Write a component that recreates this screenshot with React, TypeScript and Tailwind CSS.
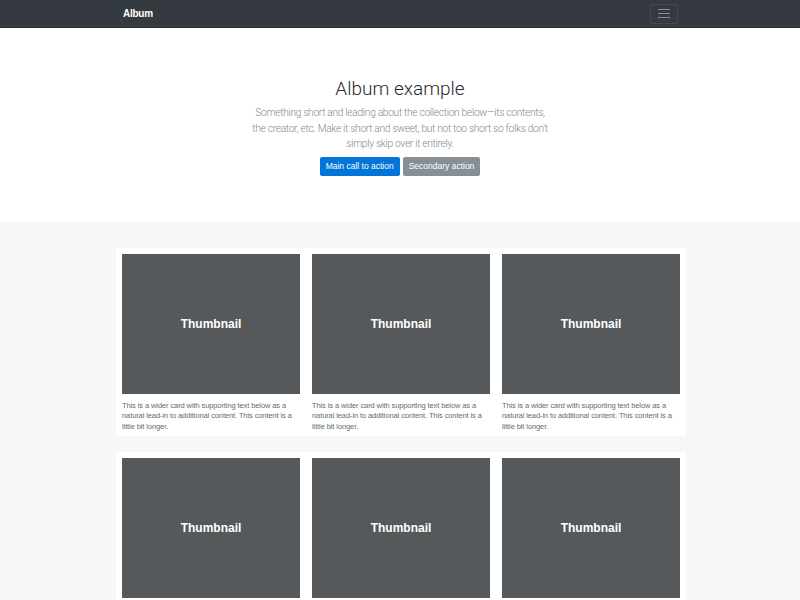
import React from 'react';

const cardLines = [
  'This is a wider card with supporting text below as a',
  'natural lead-in to additional content. This content is a',
  'little bit longer.',
];

const leadLines = [
  'Something short and leading about the collection below—its contents,',
  "the creator, etc. Make it short and sweet, but not too short so folks don't",
  'simply skip over it entirely.',
];

const Card: React.FC = () => (
  <div className="bg-white px-[6px] pt-[6px] pb-[4px]">
    <div className="h-[140px] bg-[#55595c] flex items-center justify-center">
      <span className="text-white font-bold text-[12px]">Thumbnail</span>
    </div>
    <p className="mt-[7px] text-[7.5px] tracking-[-0.1px] leading-[10.3px] text-[#636c72]">
      {cardLines.map((l, i) => (
        <span key={i} className="block whitespace-nowrap">{l}</span>
      ))}
    </p>
  </div>
);

const App: React.FC = () => {
  return (
    <div className="min-h-[600px] bg-[#f7f7f7] font-['Liberation_Sans',Arial,sans-serif]">
      <nav className="h-[28px] bg-[#353a41] border-b border-[#2c3036]">
        <div className="w-[570px] mx-auto h-full flex items-center justify-between pl-[8px]">
          <span className="text-white text-[10px] font-bold tracking-tight">Album</span>
          <button className="w-[28px] h-[20px] mr-[7px] border border-[#454a51] rounded-[2px] flex flex-col items-center justify-center gap-[2.5px]">
            <span className="block w-[12px] h-[1.5px] bg-[#8a8f96]" />
            <span className="block w-[12px] h-[1.5px] bg-[#8a8f96]" />
            <span className="block w-[12px] h-[1.5px] bg-[#8a8f96]" />
          </button>
        </div>
      </nav>

      <section className="bg-white h-[194px] flex flex-col items-center pt-[49px]">
        <h1 className="font-['Roboto',sans-serif] font-light text-[19px] leading-[24px] text-[#292b2c]">Album example</h1>
        <p className="mt-[4px] text-center font-['Roboto',sans-serif] font-light text-[10.2px] tracking-[-0.3px] leading-[15.5px] text-[#818a91]">
          {leadLines.map((l, i) => (
            <span key={i} className="block whitespace-nowrap">{l}</span>
          ))}
        </p>
        <div className="mt-[5px] flex gap-[3px]">
          <button className="h-[19px] px-[6px] rounded-[2px] bg-[#0275d8] text-white text-[8.5px]">Main call to action</button>
          <button className="h-[19px] px-[6px] rounded-[2px] bg-[#868e96] text-white text-[8.5px]">Secondary action</button>
        </div>
      </section>

      <div className="w-[570px] pt-[26px] ml-[116px]">
        <div className="grid grid-cols-3 mb-[16px]">
          <Card />
          <Card />
          <Card />
        </div>
        <div className="grid grid-cols-3 mb-[16px]">
          <Card />
          <Card />
          <Card />
        </div>
      </div>
    </div>
  );
};

export default App;
